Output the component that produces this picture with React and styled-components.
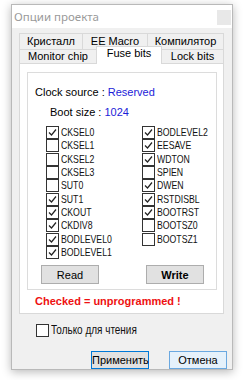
import React, { useState } from "react";
import styled, { createGlobalStyle } from "styled-components";

const GlobalStyle = createGlobalStyle`
  html, body {
    margin: 0;
    padding: 0;
    background: #ffffff;
  }
  body {
    font-family: "Liberation Sans", Arial, sans-serif;
    font-size: 11px;
    color: #000;
  }
`;

const Page = styled.div`
  width: 243px;
  height: 380px;
  padding: 4px 10px 0 11px;
  box-sizing: border-box;
`;

const Window = styled.div`
  width: 222px;
  height: 366px;
  box-sizing: border-box;
  border: 1px solid #b9b9b9;
  box-shadow: 0 2px 9px rgba(0, 0, 0, 0.28);
  background: #f0f0f0;
  display: flex;
  flex-direction: column;
`;

const TitleBar = styled.div`
  height: 23px;
  background: #ffffff;
  display: flex;
  align-items: center;
  justify-content: space-between;
  padding: 0 1px 0 2px;
  color: #9a9a9a;
  font-family: "Noto Sans", "Liberation Sans", sans-serif;
  font-size: 11.5px;
`;

const CloseBox = styled.div`
  width: 14px;
  height: 15px;
  background: #e8e8e8;
  margin-top: 1px;
`;

const Body = styled.div`
  flex: 1;
  padding: 5px 0 0 7px;
  display: flex;
  flex-direction: column;
`;

const Tabs = styled.div`
  width: 205px;
  display: flex;
  flex-direction: column;
`;

const TabRow = styled.div`
  display: flex;
  height: ${(p) => (p.$front ? 14 : 16)}px;
  position: relative;
`;

const Tab = styled.div`
  width: ${(p) => p.$w}px;
  box-sizing: border-box;
  border: 1px solid #d9d9d9;
  border-left-width: ${(p) => (p.$first ? 1 : 0)}px;
  border-bottom: none;
  background: ${(p) => (p.$active ? "#ffffff" : "#f0f0f0")};
  display: flex;
  align-items: center;
  justify-content: center;
  font-size: 11px;
  line-height: 13px;
  ${(p) =>
    p.$active &&
    `
    margin-top: -3px;
    height: 18px;
    border-left-width: 1px;
    margin-left: -1px;
    width: ${p.$w + 1}px;
    z-index: 1;
    padding-bottom: 4px;
  `}
`;

const Panel = styled.div`
  width: 205px;
  box-sizing: border-box;
  background: #ffffff;
  border: 1px solid #d9d9d9;
  padding: 8px 6px 0 7px;
  height: 251px;
`;

const Group = styled.div`
  border: 1px solid #dcdcdc;
  height: 218px;
  box-sizing: border-box;
  padding: 13px 0 0 0;
  display: flex;
  flex-direction: column;
`;

const InfoLine = styled.div`
  height: 13px;
  line-height: 13px;
  padding-left: ${(p) => p.$indent}px;
  margin-bottom: 7px;
  color: #000;
`;

const Value = styled.span`
  color: #1c1cd8;
`;

const Grid = styled.div`
  display: grid;
  grid-template-columns: 96px 90px;
  grid-auto-flow: column;
  grid-template-rows: repeat(10, 13.33px);
  padding-left: 18px;
`;

const CheckRow = styled.label`
  display: flex;
  align-items: center;
  gap: 2px;
  font-size: ${(p) => p.$size || 10.5}px;
  line-height: 13px;
  color: #111;
  cursor: default;
  white-space: nowrap;
`;

/* the dialog font is narrower than any installed face */
const Narrow = styled.span`
  display: inline-block;
  transform: scaleX(0.83);
  transform-origin: left center;
`;

const Box = styled.span`
  width: 11px;
  height: 11px;
  border: 1px solid #333;
  background: #fff;
  display: inline-flex;
  align-items: center;
  justify-content: center;
  flex: none;
`;

const ButtonRow = styled.div`
  display: flex;
  justify-content: space-between;
  padding: 0 12px 0 13px;
  margin-top: 6px;
`;

const GrayButton = styled.button`
  width: 58px;
  height: 19px;
  box-sizing: border-box;
  border: 1px solid #adadad;
  background: #e1e1e1;
  font-family: "Liberation Sans", Arial, sans-serif;
  font-size: 11px;
  font-weight: ${(p) => (p.$bold ? 700 : 400)};
  color: #000;
  padding: 0;
`;

const Warning = styled.div`
  color: #ee1111;
  font-weight: 700;
  font-size: 11px;
  line-height: 13px;
  padding-left: 8px;
  margin-top: 5px;
`;

const ReadOnly = styled.div`
  padding: 10px 0 0 17px;
`;

const Footer = styled.div`
  display: flex;
  justify-content: flex-end;
  gap: 20px;
  padding: 14px 5px 0 0;
`;

const DialogButton = styled.button`
  width: 58px;
  height: 18px;
  box-sizing: border-box;
  border: 1px solid ${(p) => (p.$hover ? "#6aa8e0" : "#0078d7")};
  background: ${(p) => (p.$hover ? "#e5f1fb" : "#e1e1e1")};
  font-family: "Liberation Sans", Arial, sans-serif;
  font-size: 11px;
  color: #000;
  padding: 0;
`;

function Check({ checked }) {
  return (
    <Box>
      {checked && (
        <svg width="9" height="9" viewBox="0 0 9 9">
          <polyline
            points="1,4.5 3.5,7 8,1.5"
            fill="none"
            stroke="#222"
            strokeWidth="1.2"
          />
        </svg>
      )}
    </Box>
  );
}

const fuses = [
  ["CKSEL0", true],
  ["CKSEL1", false],
  ["CKSEL2", false],
  ["CKSEL3", false],
  ["SUT0", false],
  ["SUT1", true],
  ["CKOUT", true],
  ["CKDIV8", true],
  ["BODLEVEL0", true],
  ["BODLEVEL1", true],
  ["BODLEVEL2", true],
  ["EESAVE", true],
  ["WDTON", true],
  ["SPIEN", false],
  ["DWEN", true],
  ["RSTDISBL", true],
  ["BOOTRST", true],
  ["BOOTSZ0", false],
  ["BOOTSZ1", false],
];

export default function App() {
  const [bits] = useState(fuses);

  return (
    <Page>
      <GlobalStyle />
      <Window>
        <TitleBar>
          <span>Опции проекта</span>
          <CloseBox />
        </TitleBar>
        <Body>
          <Tabs>
            <TabRow>
              <Tab $w={64} $first>Кристалл</Tab>
              <Tab $w={65}>EE Macro</Tab>
              <Tab $w={76}>Компилятор</Tab>
            </TabRow>
            <TabRow $front>
              <Tab $w={78} $first>Monitor chip</Tab>
              <Tab $w={65} $active>Fuse bits</Tab>
              <Tab $w={62}>Lock bits</Tab>
            </TabRow>
          </Tabs>
          <Panel>
            <Group>
              <InfoLine $indent={7}>
                Clock source : <Value>Reserved</Value>
              </InfoLine>
              <InfoLine $indent={22}>
                Boot size : <Value>1024</Value>
              </InfoLine>
              <Grid>
                {bits.map(([name, on]) => (
                  <CheckRow key={name}>
                    <Check checked={on} />
                    <Narrow>{name}</Narrow>
                  </CheckRow>
                ))}
              </Grid>
              <ButtonRow>
                <GrayButton>Read</GrayButton>
                <GrayButton $bold>Write</GrayButton>
              </ButtonRow>
            </Group>
            <Warning>Checked = unprogrammed !</Warning>
          </Panel>
          <ReadOnly>
            <CheckRow $size={12}>
              <Check checked={false} />
              <Narrow>Только для чтения</Narrow>
            </CheckRow>
          </ReadOnly>
          <Footer>
            <DialogButton>Применить</DialogButton>
            <DialogButton $hover>Отмена</DialogButton>
          </Footer>
        </Body>
      </Window>
    </Page>
  );
}
